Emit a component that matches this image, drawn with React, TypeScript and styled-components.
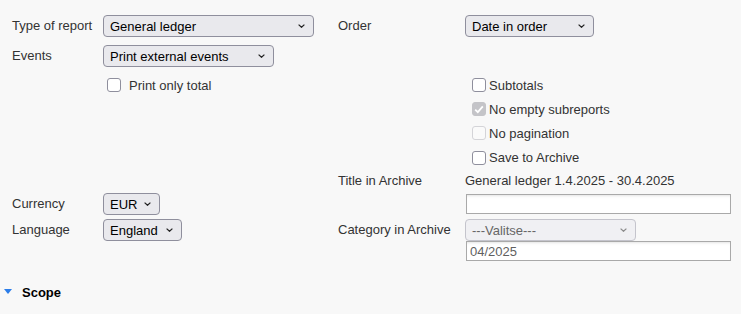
import React from 'react';
import styled, { createGlobalStyle } from 'styled-components';

const GlobalStyle = createGlobalStyle`
  body {
    margin: 0;
    background: #f8f8f8;
    font-family: 'Liberation Sans', Arial, sans-serif;
    font-size: 13px;
    color: #333333;
  }
`;

const Page = styled.main`
  width: 741px;
  height: 314px;
  overflow: hidden;
`;

const Form = styled.div`
  display: grid;
  grid-template-columns: 91px 235px 127px 266px;
  grid-template-rows: 30px 28px 24px 24px 24px 25px 23px 26px 22px 20px;
  padding: 15px 0 0 12px;
`;

const Cell = styled.div<{ $col: number; $row: number }>`
  grid-column: ${(p) => p.$col};
  grid-row: ${(p) => p.$row};
  min-width: 0;
`;

const Label = styled(Cell)`
  align-self: start;
  line-height: 22px;
  color: #333333;
  white-space: nowrap;
`;

const Value = styled(Cell)`
  align-self: start;
  line-height: 22px;
  color: #333333;
  white-space: nowrap;
`;

const SelectWrap = styled(Cell)<{ $w: number }>`
  position: relative;
  align-self: start;
  width: ${(p) => p.$w}px;
  height: 22px;
`;

const Select = styled.select<{ $muted?: boolean }>`
  appearance: none;
  box-sizing: border-box;
  width: 100%;
  height: 22px;
  margin: 0;
  padding: 0 20px 0 6px;
  font-family: 'Liberation Sans', Arial, sans-serif;
  font-size: 13px;
  color: ${(p) => (p.$muted ? '#666666' : '#000000')};
  background: ${(p) => (p.$muted ? '#f0f0f3' : '#e9e9ed')};
  border: 1px solid ${(p) => (p.$muted ? '#c4c4cc' : '#8f8f9d')};
  border-radius: 4px;
`;

const Chevron = styled.svg<{ $muted?: boolean }>`
  position: absolute;
  right: 9px;
  top: 9px;
  width: 7px;
  height: 4px;
  pointer-events: none;
  stroke: ${(p) => (p.$muted ? '#8a8a8a' : '#222222')};
`;

const TextInput = styled.input<{ $row: number }>`
  grid-column: 4;
  grid-row: ${(p) => p.$row};
  box-sizing: border-box;
  width: 265px;
  height: 20px;
  margin: 0 0 0 1px;
  padding: 0 3px;
  font-family: 'Liberation Sans', Arial, sans-serif;
  font-size: 13px;
  color: #5f5f5f;
  background: #ffffff;
  border: 1px solid #a9a9a9;
  box-shadow: inset 0 3px 3px -2px #e4e4e4;
  outline: none;
`;

const CheckRow = styled(Cell)<{ $indent: number; $gap: number }>`
  display: flex;
  align-items: center;
  align-self: center;
  gap: ${(p) => p.$gap}px;
  padding-left: ${(p) => p.$indent}px;
  line-height: 15px;
  color: #333333;
  white-space: nowrap;
`;

const Box = styled.span<{ $checked?: boolean; $disabled?: boolean }>`
  box-sizing: border-box;
  display: inline-flex;
  align-items: center;
  justify-content: center;
  width: 14px;
  height: 14px;
  border-radius: 3px;
  border: 1px solid
    ${(p) => (p.$checked ? '#c4c4c8' : p.$disabled ? '#d4d4d8' : '#8f8f9d')};
  background: ${(p) => (p.$checked ? '#c4c4c8' : p.$disabled ? '#fafafa' : '#ffffff')};
`;

const Scope = styled.div`
  display: flex;
  align-items: center;
  gap: 10px;
  margin-top: 24px;
  padding-left: 4px;
  line-height: 16px;
  font-weight: bold;
  color: #000000;
`;

const Marker = styled.span`
  width: 0;
  height: 0;
  border-left: 4px solid transparent;
  border-right: 4px solid transparent;
  border-top: 5px solid #2b7de9;
  margin-top: -4px;
`;

type DropProps = {
  col: number;
  row: number;
  w: number;
  value: string;
  disabled?: boolean;
};

function Drop({ col, row, w, value, disabled }: DropProps) {
  return (
    <SelectWrap $col={col} $row={row} $w={w}>
      <Select defaultValue={value} $muted={disabled} aria-disabled={disabled}>
        <option value={value}>{value}</option>
      </Select>
      <Chevron $muted={disabled} viewBox="0 0 7 4" fill="none" strokeWidth="1.2">
        <path d="M0.6 0.6 L3.5 3.3 L6.4 0.6" />
      </Chevron>
    </SelectWrap>
  );
}

type CheckProps = {
  col: number;
  row: number;
  label: string;
  checked?: boolean;
  disabled?: boolean;
  indent?: number;
  gap?: number;
};

function Check({ col, row, label, checked, disabled, indent = 7, gap = 3 }: CheckProps) {
  return (
    <CheckRow $col={col} $row={row} $indent={indent} $gap={gap}>
      <Box $checked={checked} $disabled={disabled}>
        {checked && (
          <svg width="10" height="9" viewBox="0 0 10 9" fill="none">
            <path d="M1.2 4.6 L3.8 7.2 L8.8 1.4" stroke="#ffffff" strokeWidth="1.8" />
          </svg>
        )}
      </Box>
      <span>{label}</span>
    </CheckRow>
  );
}

export default function App() {
  return (
    <Page>
      <GlobalStyle />
      <Form>
        <Label $col={1} $row={1}>Type of report</Label>
        <Drop col={2} row={1} w={211} value="General ledger" />
        <Label $col={3} $row={1}>Order</Label>
        <Drop col={4} row={1} w={129} value="Date in order" />

        <Label $col={1} $row={2}>Events</Label>
        <Drop col={2} row={2} w={171} value="Print external events" />

        <Check col={2} row={3} label="Print only total" indent={4} gap={8} />
        <Check col={4} row={3} label="Subtotals" />
        <Check col={4} row={4} label="No empty subreports" checked disabled />
        <Check col={4} row={5} label="No pagination" disabled />
        <Check col={4} row={6} label="Save to Archive" />

        <Label $col={3} $row={7}>Title in Archive</Label>
        <Value $col={4} $row={7}>General ledger 1.4.2025 - 30.4.2025</Value>

        <Label $col={1} $row={8}>Currency</Label>
        <Drop col={2} row={8} w={57} value="EUR" />
        <TextInput $row={8} defaultValue="" style={{ marginTop: 1 }} />

        <Label $col={1} $row={9}>Language</Label>
        <Drop col={2} row={9} w={79} value="England" />
        <Label $col={3} $row={9}>Category in Archive</Label>
        <Drop col={4} row={9} w={171} value="---Valitse---" disabled />

        <TextInput $row={10} defaultValue="04/2025" />
      </Form>
      <Scope>
        <Marker />
        <span>Scope</span>
      </Scope>
    </Page>
  );
}
